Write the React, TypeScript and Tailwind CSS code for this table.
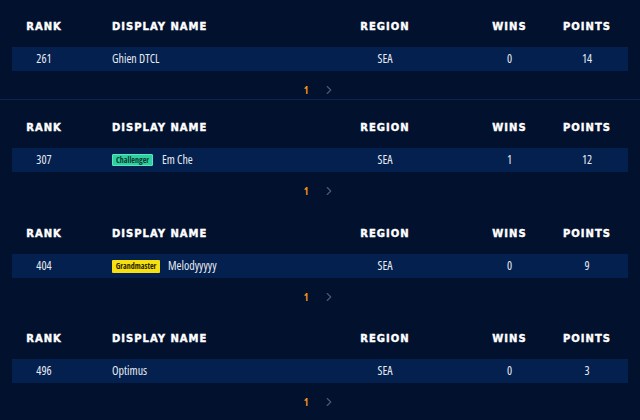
import { ChevronRight } from "lucide-react";

type Entry = {
  rank: number;
  name: string;
  badge?: "Challenger" | "Grandmaster";
  region: string;
  wins: number;
  points: number;
};

const tables: { entry: Entry; top: string; divider?: boolean }[] = [
  { entry: { rank: 261, name: "Ghien DTCL", region: "SEA", wins: 0, points: 14 }, top: "pt-3", divider: true },
  { entry: { rank: 307, name: "Em Che", badge: "Challenger", region: "SEA", wins: 1, points: 12 }, top: "pt-[13px]" },
  { entry: { rank: 404, name: "Melodyyyyy", badge: "Grandmaster", region: "SEA", wins: 0, points: 9 }, top: "pt-[19px]" },
  { entry: { rank: 496, name: "Optimus", region: "SEA", wins: 0, points: 3 }, top: "pt-[18px]" },
];

const cols = "grid grid-cols-[64px_1fr_96px_113px_82px] items-center";

function Badge({ kind }: { kind: Entry["badge"] }) {
  if (kind === "Challenger") {
    return (
      <span className="mr-[9px] flex h-3 w-[41px] items-center justify-center rounded-[1px] border border-[#58e6bd] bg-[#2fcf9f] text-[8px] font-bold text-[#0a3b33]">
        Challenger
      </span>
    );
  }
  return (
    <span className="mr-2 flex h-[13px] w-12 items-center justify-center rounded-[1px] bg-[#f7e012] text-[8px] font-bold text-[#2a2400]">
      Grandmaster
    </span>
  );
}

function Table({ entry, top, divider }: { entry: Entry; top: string; divider?: boolean }) {
  return (
    <section className={`${top} ${divider ? "border-b border-[#0c2454]" : ""}`}>
      <div className={`${cols} mx-3 h-7 font-['DejaVu_Sans',sans-serif] text-[10px] font-bold tracking-[0.1em] text-white [font-stretch:normal] [-webkit-text-stroke:0.4px_white]`}>
        <div className="text-center">RANK</div>
        <div className="pl-9">DISPLAY NAME</div>
        <div className="text-center">REGION</div>
        <div className="pl-10 text-center">WINS</div>
        <div className="text-center">POINTS</div>
      </div>
      <div className={`${cols} mx-3 mt-[7px] h-6 bg-[#03204f] text-[12px] text-[#e8ebf2]`}>
        <div className="text-center">{entry.rank}</div>
        <div className="flex items-center pl-9">
          {entry.badge && <Badge kind={entry.badge} />}
          <span>{entry.name}</span>
        </div>
        <div className="text-center">{entry.region}</div>
        <div className="pl-10 text-center">{entry.wins}</div>
        <div className="text-center">{entry.points}</div>
      </div>
      <div className="mt-[10px] flex h-[18px] items-center justify-center gap-[14px]">
        <span className="text-[10px] font-bold text-[#f0931c]">1</span>
        <ChevronRight className="h-3.5 w-3.5 text-[#4b5878]" strokeWidth={2} />
      </div>
    </section>
  );
}

export default function App() {
  return (
    <div className="h-[420px] w-[640px] overflow-hidden bg-[#01112e] font-['Open_Sans',sans-serif] [font-stretch:75%]">
      {tables.map((t, i) => (
        <Table key={i} {...t} />
      ))}
    </div>
  );
}
